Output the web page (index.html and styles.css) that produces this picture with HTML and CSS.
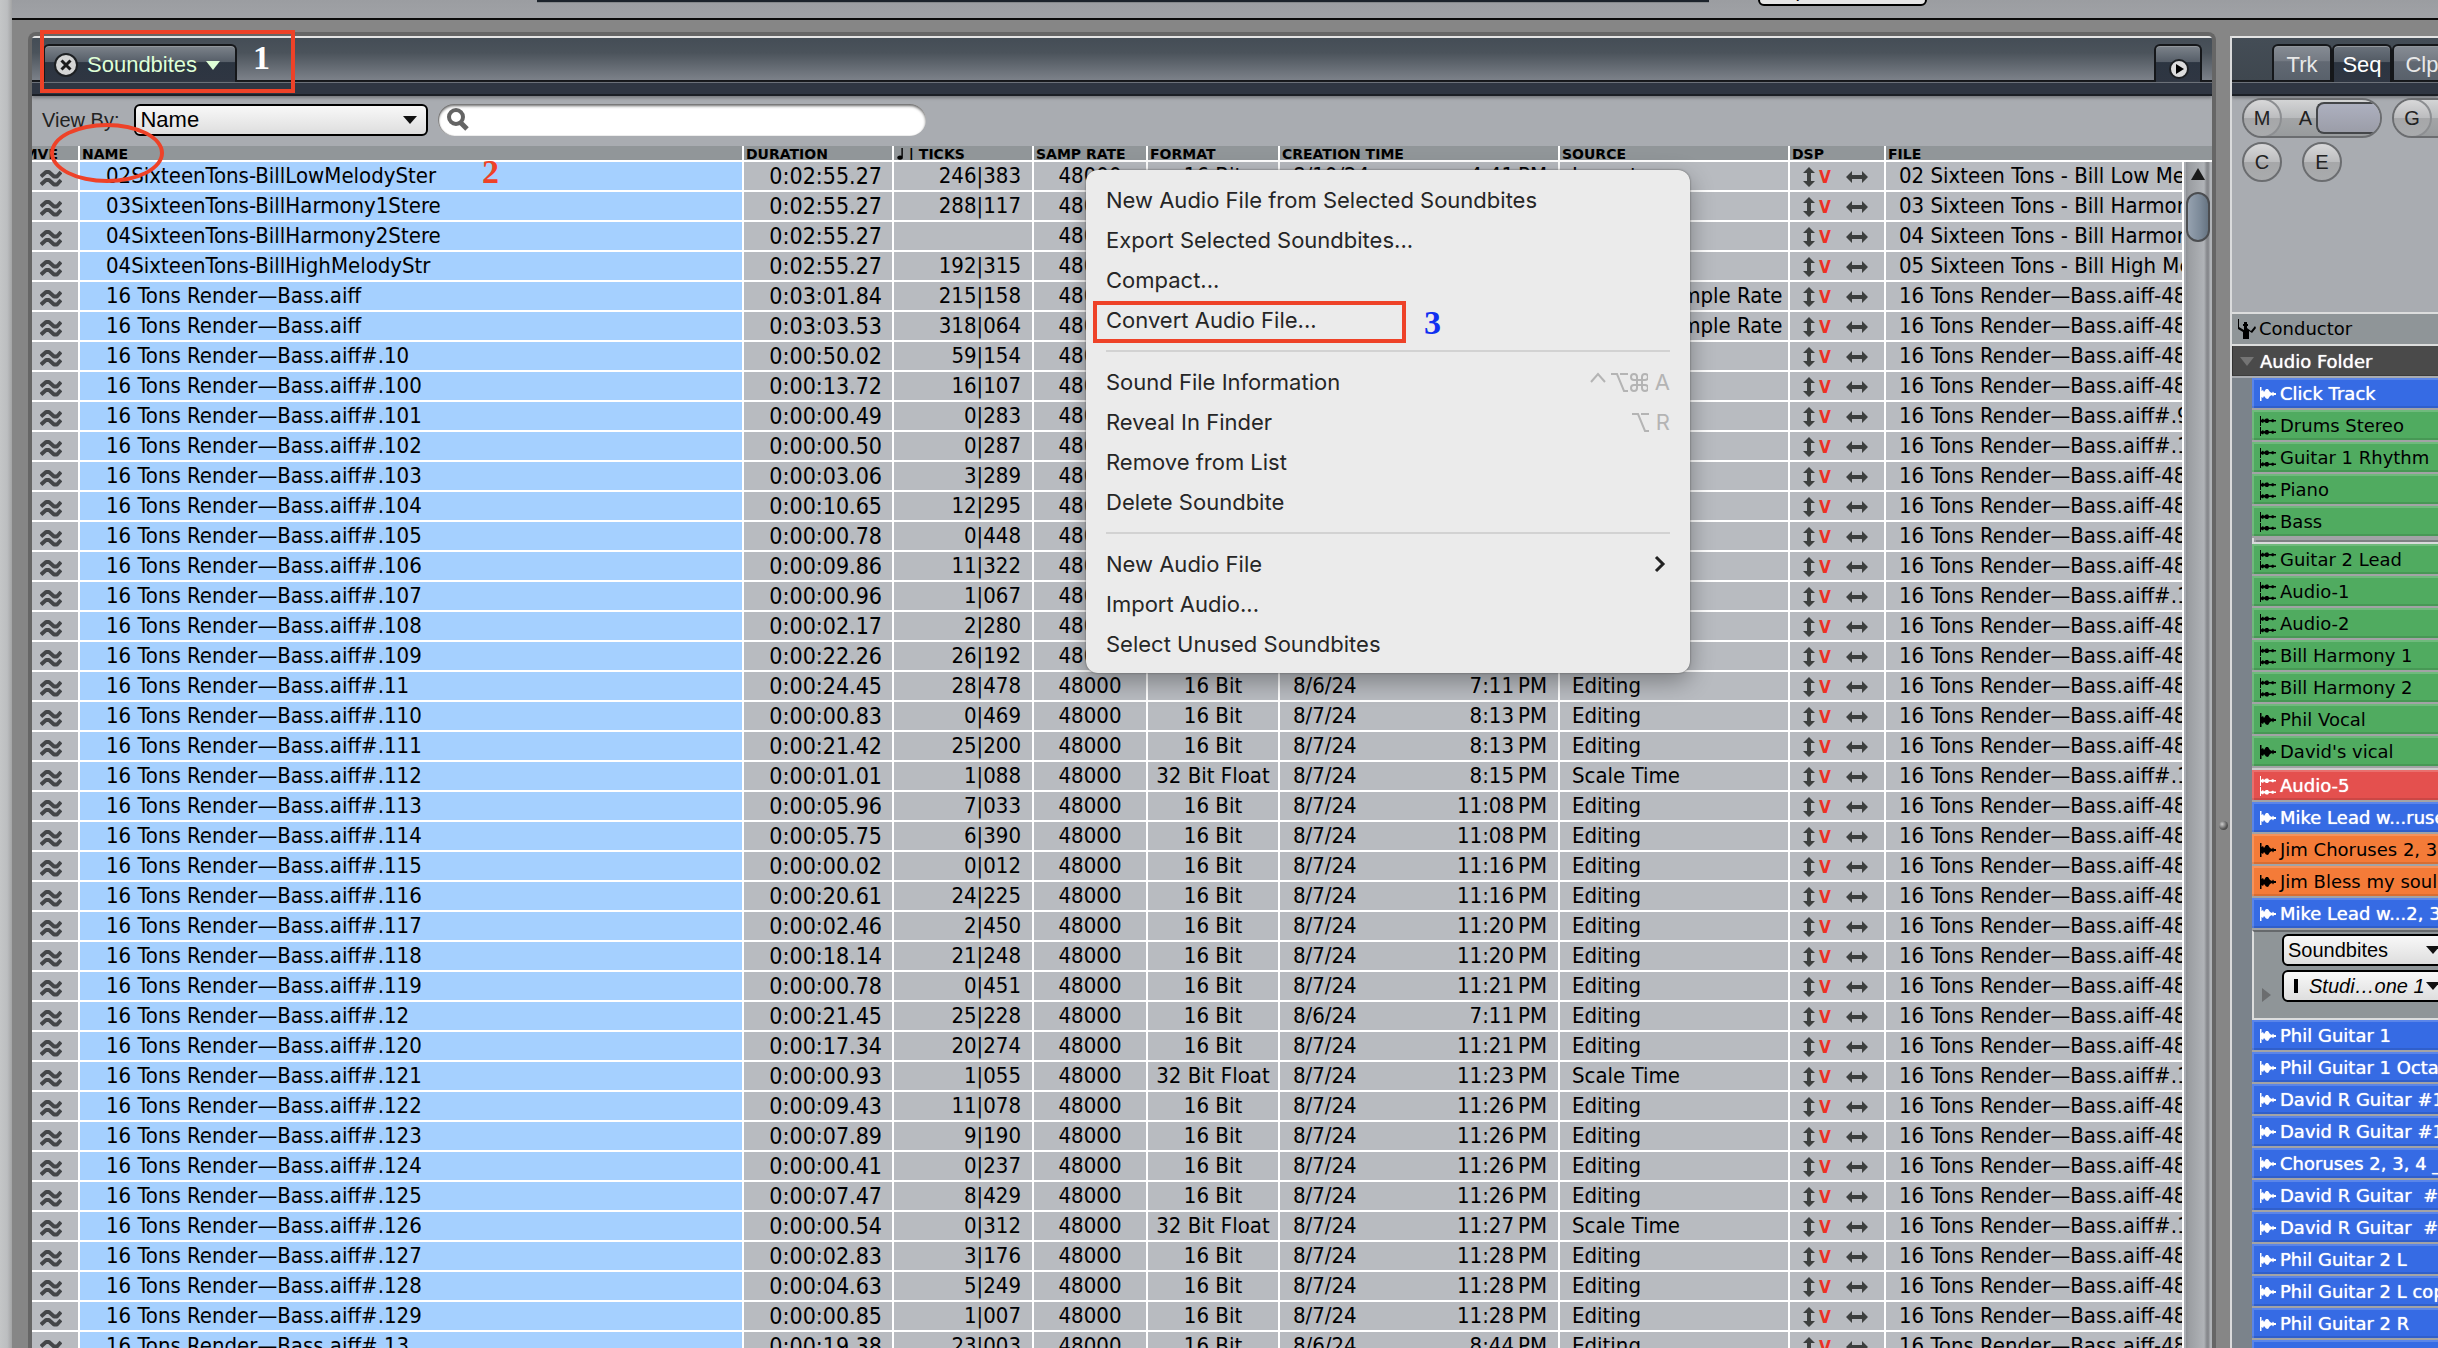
FILE: index.html
```html
<!DOCTYPE html>
<html lang="en">
<head>
<meta charset="utf-8">
<title>Soundbites</title>
<link rel="stylesheet" href="styles.css">
</head>
<body>
<svg class="defs" aria-hidden="true">
  <symbol id="wave" viewBox="0 0 22 18"><path d="M1 7.500 L6 3 L9 3 L14 7.500 L17 7.500 L21 3 M1 15.500 L6 11 L9 11 L14 15.500 L17 15.500 L21 11" fill="none" stroke="#444648" stroke-width="3.800" stroke-linejoin="round"/></symbol>
  <symbol id="updown" viewBox="0 0 12 20"><path d="M6 0 L12 6 H8 V14 H12 L6 20 L0 14 H4 V6 H0 Z"/></symbol>
  <symbol id="leftright" viewBox="0 0 22 12"><path d="M0 6 L6 0 V4 H16 V0 L22 6 L16 12 V8 H6 V12 Z"/></symbol>
  <symbol id="mono" viewBox="0 0 16 16"><path d="M0 1 H1.500 V5 L3 4 L4 6 L6 3 L8 3 L10 6 L12 7 L13 5.500 L14 7 H16 V9 H14 L13 10.500 L12 9 L10 10 L8 13 L6 12.500 L4 10 L3 12 L1.500 11 V15 H0 Z"/></symbol>
  <symbol id="stereo" viewBox="0 0 16 20"><path d="M0 0 H1 V4 L3 2.500 L4 4 L6 2.500 L8 2.500 L9 4 H11 L13 3 L14 4 H16 V5.500 H14 L13 6.500 L11 5.500 H9 L8 7 L6 7 L4 5.500 L3 7 L1 6 V10 H0 Z M0 11 H1 V15.500 L3 14 L4 15.500 L6 14 L8 14 L9 15.500 H11 L13 14.500 L14 15.500 H16 V17 H14 L13 18 L11 17 H9 L8 18.500 L6 18.500 L4 17 L3 18.500 L1 17.500 V20 H0 Z"/></symbol>
</svg>

<div class="app">
  <div class="edge"></div>
  <div class="window">
    <header class="toolbar">
      <div class="counter"></div>
      <button class="toolbar-button" type="button">Options</button>
    </header>

    <main class="workspace">
      <section class="panel" aria-label="Soundbites">
        <div class="tabbar">
          <button class="tab tab-main" type="button">
            <svg width="24" height="24" viewBox="0 0 24 24"><circle cx="12" cy="12" r="11" fill="#d4d5d5" stroke="#1d2023" stroke-width="2"/><path d="M7.500 7.500 L16.500 16.500 M16.500 7.500 L7.500 16.500" stroke="#1b1b1b" stroke-width="3"/></svg>
            <span>Soundbites</span>
            <svg width="14" height="9" viewBox="0 0 14 9"><path d="M0 0 H14 L7 9 Z" fill="#dfffd6"/></svg>
          </button>
          <button class="tab tab-corner" type="button" aria-label="Panel menu">
            <svg width="20" height="20" viewBox="0 0 20 20"><circle cx="10" cy="10" r="9" fill="#dcdcdc" stroke="#1d2023" stroke-width="2"/><path d="M7 5 L15 10 L7 15 Z" fill="#000"/></svg>
          </button>
        </div>
        <div class="subbar"></div>

        <div class="filters">
          <label for="viewby">View By:</label>
          <span class="picker picker-view"><select id="viewby"><option>Name</option></select></span>
          <label class="search">
            <svg width="24" height="24" viewBox="0 0 24 24"><circle cx="10" cy="9" r="7" fill="none" stroke="#646464" stroke-width="4"/><path d="M14 14 L21 21" stroke="#646464" stroke-width="5"/></svg>
            <input type="search" aria-label="Search soundbites">
          </label>
        </div>

        <div class="listing">
          <table>
            <colgroup><col class="c-mve"><col class="c-name"><col class="c-dur"><col class="c-ticks"><col class="c-rate"><col class="c-fmt"><col class="c-time"><col class="c-src"><col class="c-dsp"><col></colgroup>
            <thead>
              <tr><th class="mve"><span>MVE</span></th><th>NAME</th><th>DURATION</th><th><svg width="8" height="17" viewBox="0 0 8 17"><path d="M6 0 H8 V13 A4 3 0 1 1 6 11 Z"/></svg> | TICKS</th><th>SAMP RATE</th><th>FORMAT</th><th>CREATION TIME</th><th>SOURCE</th><th>DSP</th><th>FILE</th></tr>
            </thead>
            <tbody id="rows"></tbody>
          </table>
          <div class="scrollbar" aria-hidden="true">
            <svg width="14" height="12" viewBox="0 0 14 12"><path d="M7 0 L14 12 H0 Z" fill="#1a1a1a"/></svg>
            <div class="thumb"></div>
          </div>
        </div>
      </section>

      <div class="splitter"><i></i></div>

      <aside class="tracks">
        <div class="tabbar">
          <button class="tab tab-side" type="button">Trk</button>
          <button class="tab tab-side active" type="button">Seq</button>
          <button class="tab tab-side" type="button">Clp</button>
        </div>
        <div class="subbar"></div>
        <div class="modes">
          <div class="pill pill-auto"><button class="round" type="button">M</button><span>A</span><i></i></div>
          <div class="pill pill-group"><button class="round" type="button">G</button></div>
          <button class="round" type="button">C</button>
          <button class="round" type="button">E</button>
        </div>
        <div class="conductor">
          <svg width="18" height="20" viewBox="0 0 18 20"><path d="M0 0 H1 V8 L6 11 V7 H5 V5 H6 V3 H9 V5 H10 V7 H9 V9 L13 12 L17 7 L18 9 L14 14 L11 12 V20 H5 V13 L0 10 Z"/></svg>
          <span>Conductor</span>
        </div>
        <div class="folder"><svg width="14" height="9" viewBox="0 0 14 9"><path d="M0 0 H14 L7 9 Z" fill="#747474"/></svg><span>Audio Folder</span></div>
        <ul class="tracklist" id="tracks-top"></ul>
        <div class="settings">
          <svg width="9" height="14" viewBox="0 0 9 14"><path d="M0 0 L9 7 L0 14 Z" fill="#6b6d6f"/></svg>
          <span class="picker picker-track"><select aria-label="Track view"><option>Soundbites</option></select></span>
          <span class="picker picker-track picker-output"><select aria-label="Track output"><option>Studi…one 1</option></select></span>
        </div>
        <ul class="tracklist" id="tracks-bottom"></ul>
      </aside>
    </main>
  </div>
</div>

<div class="menu" role="menu">
  <button type="button" role="menuitem">New Audio File from Selected Soundbites</button>
  <button type="button" role="menuitem">Export Selected Soundbites...</button>
  <button type="button" role="menuitem">Compact...</button>
  <button type="button" role="menuitem">Convert Audio File...</button>
  <hr>
  <button type="button" role="menuitem">Sound File Information
    <kbd><svg width="58" height="22" viewBox="0 0 58 22"><path d="M1 11 L8 3 L15 11 M21 3 H27 L34 20 H38 M30 3 H38"/><path d="M47 8 V6 A3 3 0 1 0 44 9 H55 A3 3 0 1 0 52 6 V17 A3 3 0 1 0 55 14 H44 A3 3 0 1 0 47 17 Z"/></svg>A</kbd></button>
  <button type="button" role="menuitem">Reveal In Finder
    <kbd><svg width="18" height="22" viewBox="20 0 18 22"><path d="M21 3 H27 L34 20 H38 M30 3 H38"/></svg>R</kbd></button>
  <button type="button" role="menuitem">Remove from List</button>
  <button type="button" role="menuitem">Delete Soundbite</button>
  <hr>
  <button type="button" role="menuitem">New Audio File <svg class="chevron" width="12" height="18" viewBox="0 0 12 18"><path d="M2 2 L9 9 L2 16"/></svg></button>
  <button type="button" role="menuitem">Import Audio...</button>
  <button type="button" role="menuitem">Select Unused Soundbites</button>
  <span class="mark mark-convert"></span>
  <span class="note note-three">3</span>
</div>

<span class="mark mark-tab"></span>
<span class="note note-one">1</span>
<span class="mark mark-name"></span>
<span class="note note-two">2</span>

<script src="app.js"></script>
</body>
</html>
```
FILE: styles.css
```css
* { box-sizing: border-box; }
body { margin: 0; overflow: hidden; background: #868686; font-family: "DejaVu Sans Condensed", "DejaVu Sans", sans-serif; color: #000; }
button, select, input { font: inherit; color: inherit; border: 0; padding: 0; margin: 0; background: none; appearance: none; }
svg { display: block; flex: none; }
.defs { position: absolute; width: 0; height: 0; }

.app { display: flex; height: 100vh; overflow: hidden; }
.edge { flex: none; width: 12px; background: linear-gradient(90deg, #c4c6c7, #bcbec0 60%, #a2a3a4); }
.window { flex: 1; min-width: 0; display: flex; flex-direction: column; }
.toolbar { flex: none; height: 20px; display: flex; align-items: flex-start; background: linear-gradient(#9b9da1, #a0a2a6); border-bottom: 2px solid #0c0c0c; overflow: hidden; }
.counter { width: 1172px; height: 3px; margin-left: 525px; background: #1c232b; border-bottom: 1px solid #85888b; }
.toolbar-button { width: 169px; height: 32px; margin: -26px 0 0 49px; padding: 0 20px; border: 2px solid #000; border-radius: 6px; background: #e6e6e6; font: 20px/24px "Liberation Sans", sans-serif; text-align: left; }

.workspace { flex: 1; min-height: 0; display: flex; padding: 12px 0 0 16px; }
.panel { flex: 1; min-width: 0; display: flex; flex-direction: column; border: 4px solid #666; border-bottom: 0; border-radius: 8px 8px 0 0; background: #a9acb1; overflow: hidden; }
.tabbar { flex: none; height: 46px; display: flex; align-items: flex-end; border-top: 2px solid #e4e4e4; border-bottom: 2px solid #15171a; background: linear-gradient(#444d56, #4b535b 35%, #7c8189); }
.tab { display: flex; align-items: center; height: 38px; margin-bottom: -2px; border: 2px solid #15171a; border-bottom: 0; border-radius: 6px 6px 0 0; background: linear-gradient(#7c838b, #565e68 44%, #2c3541 46%, #2f3642); box-shadow: inset 0 1px #92979c; font: 22px/28px "Liberation Sans", sans-serif; }
.tab-main { width: 194px; margin-left: 11px; padding: 2px 14px 0 9px; gap: 9px; color: #dfffd6; }
.tab-corner { width: 48px; margin: 0 10px -2px auto; padding: 10px 0 0 13px; }
.tab-side { width: 60px; justify-content: center; padding-top: 3px; color: #e8e8e8; background: linear-gradient(#868c94, #747a83 44%, #626973 46%, #59616b); flex: none; height: 36px; margin-bottom: 0; }
.tab-side.active { color: #fff; height: 38px; margin-bottom: -2px; padding-top: 1px; background: linear-gradient(#6b737c, #525a64 44%, #2c3541 46%, #2f3642); }
.subbar { flex: none; height: 14px; background: #2f3642; border-top: 1px solid #6c7179; border-bottom: 2px solid #1b1f25; box-shadow: 0 2px 3px #777a7e; }

.filters { flex: none; display: flex; align-items: center; height: 50px; padding: 0 10px 2px; font: 20px/24px "Liberation Sans", sans-serif; color: #222; }
.picker { position: relative; display: block; }
.picker::after { content: ""; position: absolute; right: 11px; top: 12px; border: 7px solid transparent; border-top: 8px solid #111; border-bottom: 0; pointer-events: none; }
.picker select { display: block; width: 100%; height: 32px; padding: 0 4px; border: 2px solid #000; border-radius: 6px; background: linear-gradient(#f8f8f8, #dedede); font: 22px/26px "Liberation Sans", sans-serif; color: #000; }
.picker-view { width: 294px; margin-left: 15px; }
.search { display: flex; align-items: center; width: 488px; height: 32px; margin-left: 10px; padding: 0 8px; border-radius: 16px; background: #fff; box-shadow: inset 0 2px 3px #666, inset 1px 0 1px #888; }
.search input { flex: 1; min-width: 0; height: 28px; outline: 0; }

.listing { position: relative; flex: 1; min-height: 0; overflow: hidden; background: linear-gradient(#919699 14px, #fff 14px, #fff 16px, #a9acb1 16px); }
table { width: 100%; table-layout: fixed; border-spacing: 0; padding-right: 28px; font-size: 22px; line-height: 28px; }
.c-mve { width: 48px; } .c-name { width: 664px; } .c-dur { width: 150px; } .c-ticks { width: 140px; } .c-rate { width: 114px; }
.c-fmt { width: 132px; } .c-time { width: 280px; } .c-src { width: 230px; } .c-dsp { width: 96px; }
th { height: 16px; padding: 2px 0 0 2px; border-right: 2px solid #fff; border-bottom: 2px solid #fff; background: #919699; font: bold 14px/12px "DejaVu Sans", sans-serif; text-align: left; white-space: nowrap; overflow: hidden; }
th:last-child { border-right: 0; }
th svg { display: inline-block; height: 12px; vertical-align: top; }
th.mve { direction: rtl; padding: 2px 22px 0 0; }
td { height: 30px; padding: 0; border-right: 2px solid #fff; border-bottom: 2px solid #fff; background: #b8bbc0; white-space: nowrap; overflow: hidden; }
td.mve { padding: 3px 0 0 8px; }
td.name { padding-left: 26px; background: #a5d0ff; }
td.dur { padding-right: 10px; text-align: right; font-size: 23px; }
td.ticks { padding-right: 11px; text-align: right; }
td.rate, td.fmt { text-align: center; }
.when { display: flex; justify-content: space-between; padding: 0 11px 0 13px; }
td.src { padding-left: 12px; }
td.file { padding-left: 13px; }
.dsp-icons { display: flex; align-items: center; height: 28px; padding: 2px 0 0 13px; fill: #3c3f3e; }
.dsp-icons b { width: 31px; padding-left: 4px; color: #ee3124; font: bold 17px/20px "DejaVu Sans Condensed", sans-serif; }
.scrollbar { position: absolute; top: 16px; right: 0; bottom: 0; width: 28px; padding-top: 6px; display: flex; flex-direction: column; align-items: center; background: linear-gradient(90deg, #a9acb1 2px, #8d9095 2px, #9b9ea2 5px, #b0b3b7 20px, #85878b 23px, #8b8d91 25px, #b0b3b7 26px); }
.thumb { width: 24px; height: 50px; margin-top: 12px; border: 2px solid #4b4d50; border-radius: 12px; background: linear-gradient(90deg, #96a2b0, #7c8a99 60%, #667482); }

.splitter { flex: none; width: 14px; display: flex; align-items: center; }
.splitter i { width: 9px; height: 9px; margin: 270px 0 0 3px; border-radius: 50%; background: radial-gradient(circle at 35% 35%, #ccc, #555 60%, #333); }

.tracks { flex: none; width: 208px; margin-top: 4px; border-left: 2px solid #dadbdc; background: #a9acb1; overflow: hidden; font: 18px/30px "DejaVu Sans", sans-serif; }
.tracks .tabbar { padding-left: 40px; background: linear-gradient(#444d56, #3f474f); }
.modes { display: flex; flex-wrap: wrap; align-content: flex-start; height: 216px; width: 300px; padding: 2px 10px; font: 20px/36px "Liberation Sans", sans-serif; color: #222; }
.round { width: 40px; height: 40px; margin: 0 20px 0 0; border: 2px solid #6b6d70; border-radius: 20px; background: linear-gradient(#d8d8d9, #bcbdbf 49%, #a6a7a9 51%, #a9abad); text-align: center; }
.pill { display: flex; width: 140px; height: 40px; margin: 0 10px 4px 0; border: 2px solid #6b6d70; border-radius: 20px; background: linear-gradient(#d3d4d5, #b9bbbd 49%, #a3a5a7 51%, #989b9d); overflow: hidden; }
.pill .round { flex: none; margin: -2px 0 0 -2px; border-color: #8c8e91; }
.pill span { width: 34px; text-align: right; padding-right: 4px; }
.pill i { flex: 1; height: 32px; margin: 2px 0; border: 2px solid #444649; border-right: 0; border-radius: 8px 0 0 8px; background: linear-gradient(#adb0bf, #9b9da8); }
.pill-group { width: 130px; margin-right: 0; }
.conductor { display: flex; align-items: center; gap: 3px; height: 34px; padding-left: 6px; border-top: 2px solid #dcdddd; border-bottom: 2px solid #dcdddd; background: #8f9598; }
.folder { display: flex; align-items: center; gap: 6px; height: 30px; padding: 2px 0 0 7px; border-left: 1px solid #333; border-bottom: 2px solid #3c3c3c; background: #4a4a4a; color: #fff; text-shadow: 0 0 1px #fff; border-bottom-width: 1px; margin-bottom: 2px; }
.tracklist { list-style: none; margin: 0; padding: 0 0 0 20px; background: #7b838b; }
.tracklist li { display: flex; align-items: center; gap: 4px; height: 32px; padding: 2px 0 0 8px; border-bottom: 2px solid #a2a3a5; white-space: pre; box-shadow: inset 2px 2px #ffffff2e, inset 0 -2px #0000001c; }
.green { background: #50ab60; }
.blue { background: #366be4; }
.red { background: #e4504e; }
.orange { background: #f47b38; }
.blue, .red { color: #fff; text-shadow: 0 0 1px #fff; }
.tracklist svg { fill: currentColor; }
.tracklist .rule { height: 6px; border-bottom: 2px solid #d9dadb; border-left: 2px solid #d9dadb; background: #8d9194; }
.tracklist .thin { height: 2px; padding: 0; background: #d9dadb; border: 0; }
.settings { display: grid; grid-template-columns: 20px 166px; align-content: start; gap: 4px 0; height: 90px; margin-left: 20px; padding: 2px 0 0 8px; border-left: 2px solid #dcdddd; border-bottom: 2px solid #dcdddd; border-top: 2px solid #66696c; background: #8f9598; box-shadow: -20px 0 #7b838b; }
.settings > svg { grid-row: 1 / 3; align-self: end; }
.picker-track select { font-size: 20px; }
.picker-track::after { right: 8px; }
.picker-output select { padding-left: 25px; font-style: italic; }
.picker-output::before { content: ""; position: absolute; left: 12px; top: 9px; width: 4px; height: 14px; background: #000; }

.menu { position: absolute; left: 1086px; top: 170px; width: 604px; padding: 10px 0 9px; border-radius: 12px; background: #ebebeb; box-shadow: 0 0 2px #555, 0 8px 24px #0005; font: 22px/40px Inter, sans-serif; color: #262626; }
.menu button { display: flex; align-items: center; width: 100%; height: 40px; padding: 0 20px; text-align: left; white-space: nowrap; }
.menu hr { height: 2px; margin: 10px 20px; border: 0; background: #d2d2d2; }
.menu kbd { display: flex; align-items: center; gap: 7px; margin-left: auto; font: inherit; color: #b4b4b4; }
.menu kbd path { fill: none; stroke: #b4b4b4; stroke-width: 2; }
.menu .chevron { margin: 0 4px 0 auto; }
.chevron path { fill: none; stroke: #222; stroke-width: 3; }

.mark { position: absolute; border: 4px solid #ee4228; pointer-events: none; }
.mark-convert { left: 7px; top: 131px; width: 313px; height: 42px; }
.mark-tab { left: 40px; top: 30px; width: 255px; height: 63px; }
.mark-name { left: 50px; top: 123px; width: 114px; height: 60px; border-radius: 50%; }
.note { position: absolute; font: bold 34px/34px "Liberation Serif", serif; pointer-events: none; }
.note-one { left: 253px; top: 41px; color: #fff; }
.note-two { left: 482px; top: 155px; color: #ee4228; }
.note-three { left: 338px; top: 136px; color: #1030f0; }
```
FILE: app.js
```js
const BASS = "16 Tons Render—Bass.aiff";

// name, duration, ticks, format, date, time, source, file
const soundbites = [
  ["02SixteenTons-BillLowMelodySter", "0:02:55.27", "246|383", "16 Bit", "8/10/24", "4:41 PM", "Import", "02 Sixteen Tons - Bill Low Melody"],
  ["03SixteenTons-BillHarmony1Stere", "0:02:55.27", "288|117", "", "", "", "", "03 Sixteen Tons - Bill Harmony"],
  ["04SixteenTons-BillHarmony2Stere", "0:02:55.27", "", "", "", "", "", "04 Sixteen Tons - Bill Harmony"],
  ["04SixteenTons-BillHighMelodyStr", "0:02:55.27", "192|315", "", "", "", "", "05 Sixteen Tons - Bill High Melody"],
  [BASS, "0:03:01.84", "215|158", "", "", "", "Convert Sample Rate", "-48"],
  [BASS, "0:03:03.53", "318|064", "", "", "", "Convert Sample Rate", "-48"],
  ["#.10", "0:00:50.02", "59|154", "", "", "", "", "-48"],
  ["#.100", "0:00:13.72", "16|107", "", "", "", "", "-48"],
  ["#.101", "0:00:00.49", "0|283", "", "", "", "", "#.9"],
  ["#.102", "0:00:00.50", "0|287", "", "", "", "", "#.1"],
  ["#.103", "0:00:03.06", "3|289", "", "", "", "", "-48"],
  ["#.104", "0:00:10.65", "12|295", "", "", "", "", "-48"],
  ["#.105", "0:00:00.78", "0|448", "", "", "", "", "-48"],
  ["#.106", "0:00:09.86", "11|322", "", "", "", "", "-48"],
  ["#.107", "0:00:00.96", "1|067", "", "", "", "", "#.1"],
  ["#.108", "0:00:02.17", "2|280", "", "", "", "", "-48"],
  ["#.109", "0:00:22.26", "26|192", "", "", "", "", "-48"],
  ["#.11", "0:00:24.45", "28|478", "16 Bit", "8/6/24", "7:11 PM", "Editing", "-48"],
  ["#.110", "0:00:00.83", "0|469", "16 Bit", "8/7/24", "8:13 PM", "Editing", "-48"],
  ["#.111", "0:00:21.42", "25|200", "16 Bit", "8/7/24", "8:13 PM", "Editing", "-48"],
  ["#.112", "0:00:01.01", "1|088", "32 Bit Float", "8/7/24", "8:15 PM", "Scale Time", "#.1"],
  ["#.113", "0:00:05.96", "7|033", "16 Bit", "8/7/24", "11:08 PM", "Editing", "-48"],
  ["#.114", "0:00:05.75", "6|390", "16 Bit", "8/7/24", "11:08 PM", "Editing", "-48"],
  ["#.115", "0:00:00.02", "0|012", "16 Bit", "8/7/24", "11:16 PM", "Editing", "-48"],
  ["#.116", "0:00:20.61", "24|225", "16 Bit", "8/7/24", "11:16 PM", "Editing", "-48"],
  ["#.117", "0:00:02.46", "2|450", "16 Bit", "8/7/24", "11:20 PM", "Editing", "-48"],
  ["#.118", "0:00:18.14", "21|248", "16 Bit", "8/7/24", "11:20 PM", "Editing", "-48"],
  ["#.119", "0:00:00.78", "0|451", "16 Bit", "8/7/24", "11:21 PM", "Editing", "-48"],
  ["#.12", "0:00:21.45", "25|228", "16 Bit", "8/6/24", "7:11 PM", "Editing", "-48"],
  ["#.120", "0:00:17.34", "20|274", "16 Bit", "8/7/24", "11:21 PM", "Editing", "-48"],
  ["#.121", "0:00:00.93", "1|055", "32 Bit Float", "8/7/24", "11:23 PM", "Scale Time", "#.1"],
  ["#.122", "0:00:09.43", "11|078", "16 Bit", "8/7/24", "11:26 PM", "Editing", "-48"],
  ["#.123", "0:00:07.89", "9|190", "16 Bit", "8/7/24", "11:26 PM", "Editing", "-48"],
  ["#.124", "0:00:00.41", "0|237", "16 Bit", "8/7/24", "11:26 PM", "Editing", "-48"],
  ["#.125", "0:00:07.47", "8|429", "16 Bit", "8/7/24", "11:26 PM", "Editing", "-48"],
  ["#.126", "0:00:00.54", "0|312", "32 Bit Float", "8/7/24", "11:27 PM", "Scale Time", "#.1"],
  ["#.127", "0:00:02.83", "3|176", "16 Bit", "8/7/24", "11:28 PM", "Editing", "-48"],
  ["#.128", "0:00:04.63", "5|249", "16 Bit", "8/7/24", "11:28 PM", "Editing", "-48"],
  ["#.129", "0:00:00.85", "1|007", "16 Bit", "8/7/24", "11:28 PM", "Editing", "-48"],
  ["#.13", "0:00:19.38", "23|003", "16 Bit", "8/6/24", "8:44 PM", "Editing", "-48"],
];

const icon = (id, w, h) => `<svg width="${w}" height="${h}"><use href="#${id}"/></svg>`;
const full = (text) => (/^[#-]/.test(text) ? BASS + text : text);

document.getElementById("rows").innerHTML = soundbites.map(([name, dur, ticks, fmt, date, time, src, file]) => `<tr>
  <td class="mve">${icon("wave", 22, 18)}</td><td class="name">${full(name)}</td><td class="dur">${dur}</td>
  <td class="ticks">${ticks}</td><td class="rate">48000</td><td class="fmt">${fmt}</td>
  <td><div class="when"><span>${date}</span><span>${time.replace(" ", "\u2009")}</span></div></td><td class="src">${src}</td>
  <td><div class="dsp-icons">${icon("updown", 12, 20)}<b>V</b>${icon("leftright", 22, 12)}</div></td>
  <td class="file">${full(file)}</td></tr>`).join("");

// colour, channel icon, title; a lone word is a divider
const upper = [
  ["blue", "mono", "Click Track"], ["green", "stereo", "Drums Stereo"], ["green", "stereo", "Guitar 1 Rhythm"],
  ["green", "stereo", "Piano"], ["green", "stereo", "Bass"], ["rule"],
  ["green", "stereo", "Guitar 2 Lead"], ["green", "stereo", "Audio-1"], ["green", "stereo", "Audio-2"],
  ["green", "stereo", "Bill Harmony 1"], ["green", "stereo", "Bill Harmony 2"], ["green", "mono", "Phil Vocal"],
  ["green", "mono", "David's vical"], ["thin"],
  ["red", "stereo", "Audio-5"], ["blue", "mono", "Mike Lead w...ruses"], ["orange", "mono", "Jim Choruses 2, 3, 4"],
  ["orange", "mono", "Jim Bless my soul"], ["blue", "mono", "Mike Lead w...2, 3, 4"],
];
const lower = [
  "Phil Guitar 1", "Phil Guitar 1 Octave", "David R Guitar #1", "David R Guitar #1", "Choruses 2, 3, 4 _",
  "David R Guitar  #2", "David R Guitar  #2", "Phil Guitar 2 L", "Phil Guitar 2 L copy", "Phil Guitar 2 R", "",
].map((title) => ["blue", "mono", title]);

const trackItem = ([colour, kind, title]) => kind
  ? `<li class="${colour}">${icon(kind, 16, kind === "mono" ? 16 : 20)}<span>${title}</span></li>`
  : `<li class="${colour}"></li>`;
document.getElementById("tracks-top").innerHTML = upper.map(trackItem).join("");
document.getElementById("tracks-bottom").innerHTML = lower.map(trackItem).join("");
```
